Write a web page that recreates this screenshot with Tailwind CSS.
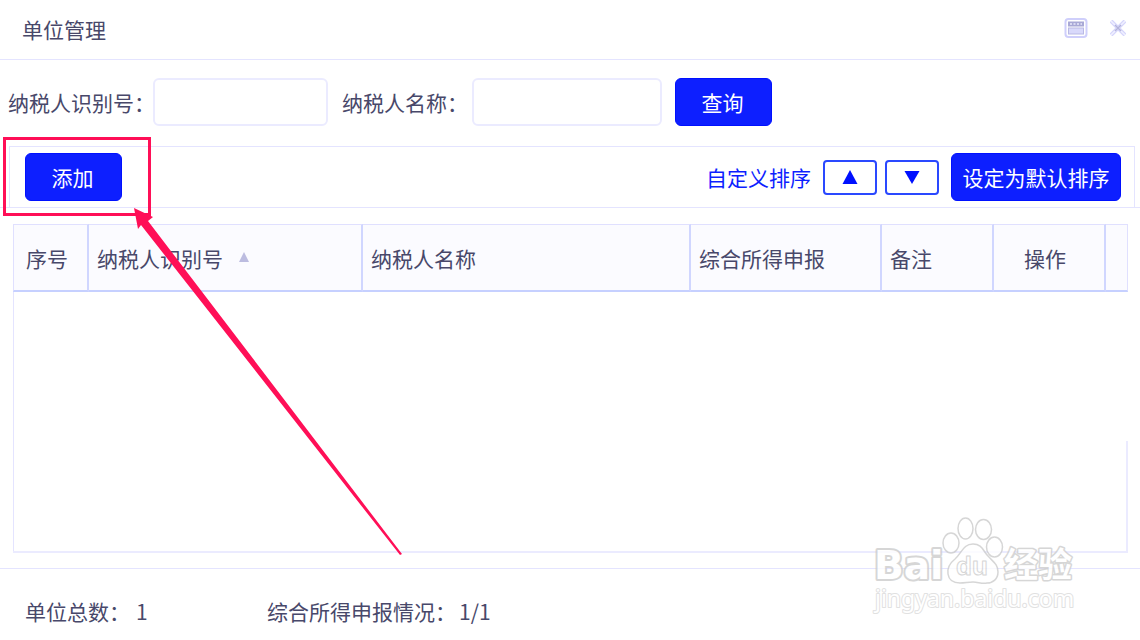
<!DOCTYPE html>
<html lang="zh-CN">
<head>
    <meta charset="UTF-8">
    <meta name="viewport" content="width=device-width, initial-scale=1.0">
    <script src="https://cdn.jsdelivr.net/npm/@tailwindcss/browser@4"></script>
    <title>单位管理</title>
</head>
<body class="bg-white">
    <div
        class="relative min-h-screen flex flex-col overflow-hidden whitespace-nowrap
        text-[21px] leading-7 text-[#48486a] font-['Noto_Sans_CJK_SC',sans-serif]"
    >
        <header class="h-15 pl-[22px] pr-[14px] pb-0.5 flex items-center justify-between border-b border-[#e4e4ff]">
            <h1>单位管理</h1>
            <div class="flex items-center gap-[22px] pb-0.5">
                <button type="button" aria-label="最大化">
                    <svg class="w-6 h-5" viewBox="0 0 24 20" fill="none">
                        <rect x="1.5" y="1" width="21" height="18" rx="3" fill="#fff" stroke="#cfcffb" stroke-width="2"/>
                        <rect x="4" y="3.5" width="16" height="5" fill="#a9a9d6"/>
                        <path d="M6 6h12" stroke="#e9e9fa" stroke-width="1.5" stroke-dasharray="2 1.5"/>
                        <rect x="4.5" y="10" width="15" height="6" fill="#d9d9fb" stroke="#b9b9e4"/>
                    </svg>
                </button>
                <button type="button" aria-label="关闭">
                    <svg class="w-4 h-4" viewBox="0 0 16 16" fill="none">
                        <path d="M1 1l14 14M15 1L1 15" stroke="#d6d6fb" stroke-width="4"/>
                        <path d="M1 1l14 14M15 1L1 15" stroke="#f0f0ff" stroke-width="1.5"/>
                        <path d="M5 5l6 6M11 5l-6 6" stroke="#b4b4dc" stroke-width="1.5"/>
                    </svg>
                </button>
            </div>
        </header>

        <form class="flex items-center pl-2 pt-[18px] pb-5">
            <label for="tax_id" class="w-[145px]">纳税人识别号：</label>
            <input
                type="text" id="tax_id" name="tax_id"
                class="w-[175px] h-12 px-3 border-2 border-[#ebebff] rounded-md">
            <label for="tax_name" class="w-[130px] ml-[14px]">纳税人名称：</label>
            <input
                type="text" id="tax_name" name="tax_name"
                class="w-[190px] h-12 px-3 border-2 border-[#ebebff] rounded-md">
            <button
                type="button"
                class="w-[97px] h-12 ml-[13px] pr-0.5 rounded-md bg-[#0d1fff] border border-[#0010ff] text-white"
            >
                查询
            </button>
        </form>

        <section class="border-b border-[#e4e4ff]">
            <div class="ml-[9px] mr-[5px] pl-[15px] pr-[13px] py-1.5 flex items-center justify-between border-x border-t border-[#e4e4ff]">
                <div class="relative">
                    <button
                        type="button"
                        class="w-[97px] h-12 pr-0.5 rounded-md bg-[#0d1fff] border border-[#0010ff] text-white"
                    >
                        添加
                    </button>
                    <!-- highlight round the add button -->
                    <div class="absolute -left-[22px] -top-4 w-[148px] h-[79px] border-3 border-[#ff0f57]"></div>
                </div>
                <div class="flex items-center">
                    <span class="mr-3 text-[#0d1fff]">自定义排序</span>
                    <button type="button" aria-label="上移" class="w-[54px] h-[35px] mr-2 flex items-center justify-center rounded border-2 border-[#2a48ff]">
                        <svg class="w-4 h-4" viewBox="0 0 16 16"><path d="M8 1l7.5 14H.5z" fill="#0010ff"/></svg>
                    </button>
                    <button type="button" aria-label="下移" class="w-[54px] h-[35px] mr-3 flex items-center justify-center rounded border-2 border-[#2a48ff]">
                        <svg class="w-4 h-4" viewBox="0 0 16 16"><path d="M8 15L.5 2h15z" fill="#0010ff"/></svg>
                    </button>
                    <button
                        type="button"
                        class="w-[170px] h-12 rounded-md bg-[#0d1fff] border border-[#0010ff] text-white"
                    >
                        设定为默认排序
                    </button>
                </div>
            </div>
        </section>

        <main class="flex-1 flex flex-col ml-[13px] mr-3 mt-4 mb-[15px] border-b-2 border-[#ebebff]">
            <table class="w-full table-fixed border-separate border-spacing-0">
                <thead>
                    <tr class="h-[68px] bg-[#fbfbff] text-left *:font-normal *:border-t *:border-t-[#e0e0ff] *:border-b-2 *:border-b-[#c6d0ff]">
                        <th class="w-[76px] pl-3 border-l border-l-[#e0e0ff] border-r-2 border-r-[#d0d6ff]">序号</th>
                        <th class="w-[274px] pl-2 border-r-2 border-r-[#d0d6ff]">
                            <span class="flex items-center gap-4">
                                纳税人识别号
                                <svg class="w-[10px] h-3" viewBox="0 0 10 12"><path d="M5 0l5 10H0z" fill="#bcbce0"/></svg>
                            </span>
                        </th>
                        <th class="pl-2 border-r-2 border-r-[#d0d6ff]">纳税人名称</th>
                        <th class="w-[191px] pl-2 border-r-2 border-r-[#d0d6ff]">综合所得申报</th>
                        <th class="w-[112px] pl-2 border-r-2 border-r-[#d0d6ff]">备注</th>
                        <th class="w-[112px] pr-2 text-center border-r-2 border-r-[#d0d6ff]">操作</th>
                        <td class="w-[22px] border-r border-r-[#e0e0ff]"></td>
                    </tr>
                </thead>
            </table>
            <div class="flex-1 flex flex-col border-l border-[#e4e4ff]">
                <div class="h-[149px]"></div>
                <div class="flex-1 border-r-2 border-[#ebebff]"></div>
            </div>
        </main>

        <footer class="flex border-t border-[#e4e4ff] pl-[25px] pt-7 pb-[15px]">
            <p class="w-[242px] flex gap-[6px]"><span>单位总数：</span><span>1</span></p>
            <p class="flex gap-[3px]"><span>综合所得申报情况：</span><span>1/1</span></p>
        </footer>

        <!-- arrow to the add button -->
        <svg class="absolute left-[130px] top-[204px] w-[276px] h-[354px] pointer-events-none" viewBox="130 204 276 354">
            <path d="M134 208L153 217L148 221L402 554L400 555L141 225L138 229Z" fill="#ff0f57"/>
        </svg>

        <!-- watermark -->
        <svg
            class="absolute right-[58px] bottom-[20px] w-[212px] h-[108px] pointer-events-none opacity-80"
            viewBox="870 512 212 108" fill="#fff" stroke="#cdcdcd" stroke-linejoin="round"
        >
            <text x="874" y="579" font-size="39" font-family="DejaVu Sans, sans-serif" font-weight="bold" stroke-width="4" paint-order="stroke">Bai</text>
            <g stroke-width="1.5">
                <ellipse cx="951" cy="543" rx="8" ry="10"/>
                <ellipse cx="965.5" cy="528.5" rx="7.5" ry="10.5"/>
                <ellipse cx="983.5" cy="529.5" rx="8" ry="10"/>
                <ellipse cx="994.5" cy="547" rx="8" ry="10"/>
                <path d="M973 544c-10 0-11 9-18 15-5 4-8 9-7 15 1 7 6 9 12 9 5 0 8-1 13-1s9 2 14 1c6 0 11-4 11-11 0-8-5-10-10-16-5-5-6-12-15-12z"/>
            </g>
            <text x="956" y="575" font-size="26" font-family="Liberation Sans, sans-serif" font-weight="bold" stroke-width="1">du</text>
            <text x="1004" y="577" font-size="34" font-family="Noto Sans CJK SC, sans-serif" font-weight="bold" stroke-width="3" paint-order="stroke">经验</text>
            <text x="875" y="607" font-size="23" font-family="Noto Sans, sans-serif" stroke="#dadada" stroke-width="2" paint-order="stroke">jingyan.baidu.com</text>
        </svg>
    </div>
</body>
</html>
